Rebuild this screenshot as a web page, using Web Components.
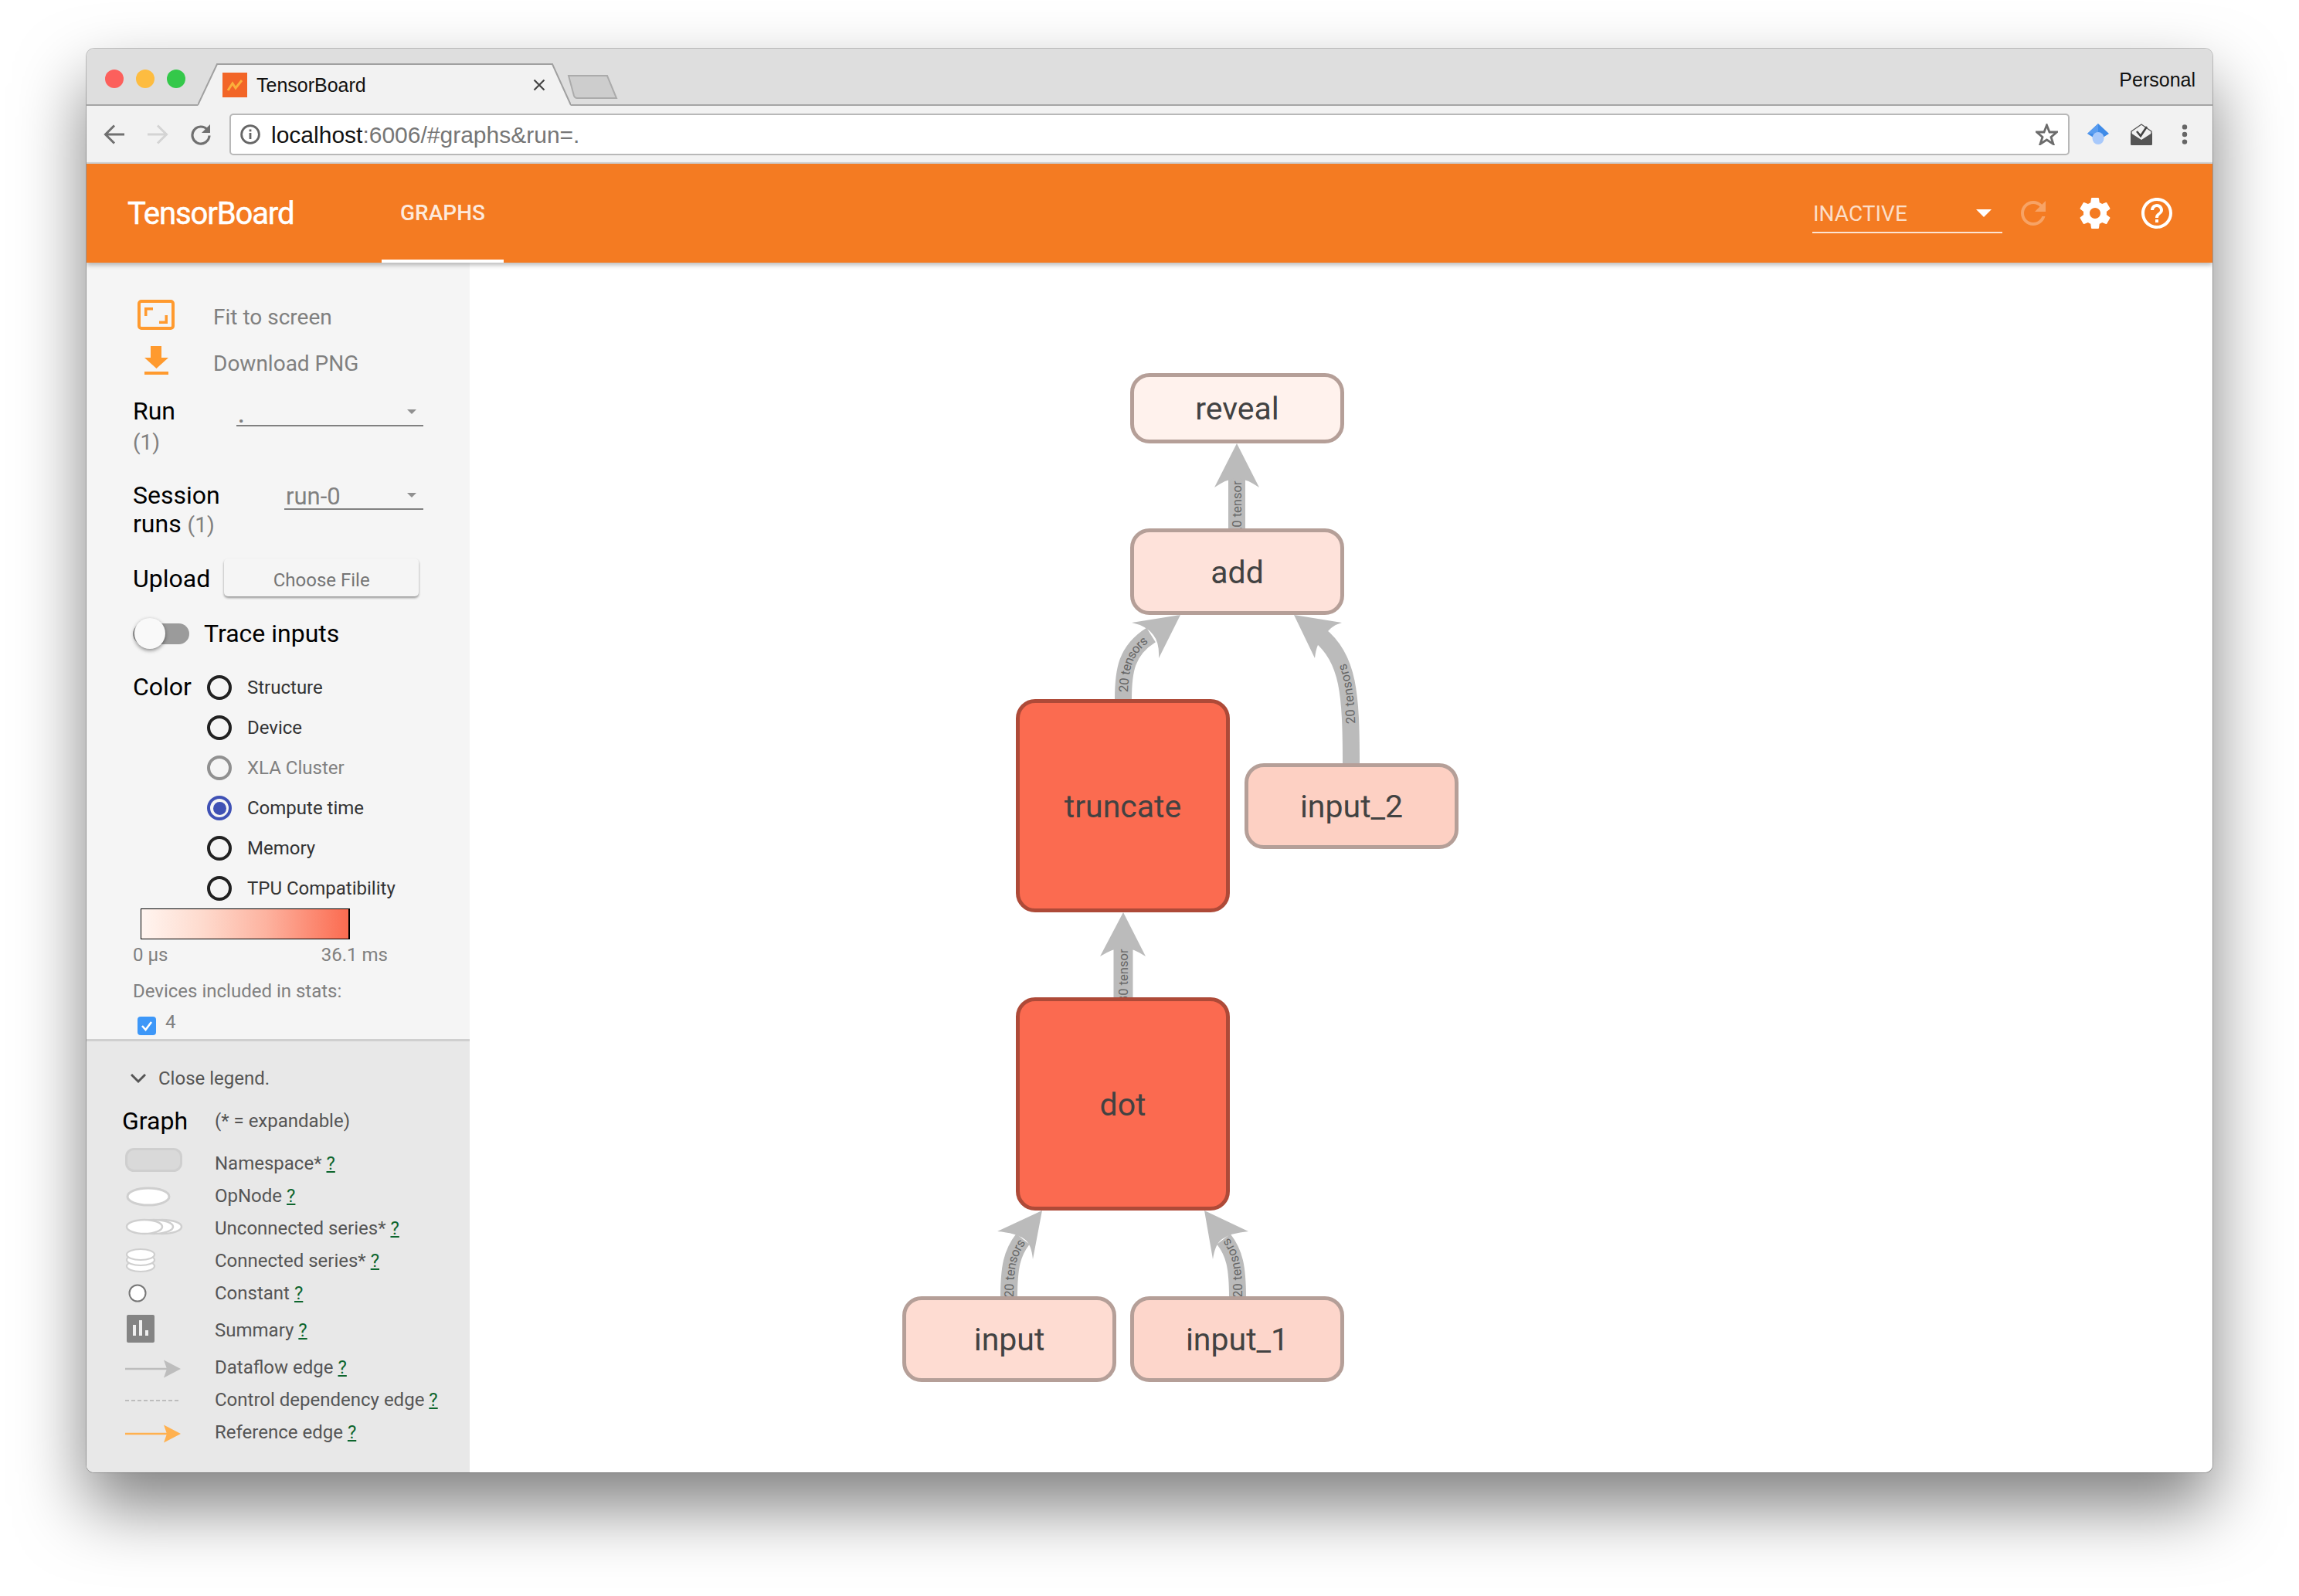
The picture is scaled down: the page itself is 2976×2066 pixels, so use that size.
<!DOCTYPE html>
<html>
<head>
<meta charset="utf-8">
<title>TensorBoard</title>
<style>
  html, body { margin: 0; background: #fff; }
  body { padding: 63px 112px 0; height: 2003px; overflow: hidden; font-family: Roboto, "Liberation Sans", sans-serif; }
</style>
</head>
<body>
<browser-window>
  <tb-header></tb-header>
  <div style="display:flex;flex:1;min-height:0">
    <tb-sidebar>
      <tb-controls></tb-controls>
      <tb-legend></tb-legend>
    </tb-sidebar>
    <tb-graph></tb-graph>
  </div>
</browser-window>

<script>
const GEAR = "M19.43 12.98c.04-.32.07-.64.07-.98s-.03-.66-.07-.98l2.11-1.65c.19-.15.24-.42.12-.64l-2-3.46c-.12-.22-.39-.3-.61-.22l-2.49 1c-.52-.4-1.08-.73-1.69-.98l-.38-2.65C14.46 2.18 14.25 2 14 2h-4c-.25 0-.46.18-.49.42l-.38 2.65c-.61.25-1.17.59-1.69.98l-2.49-1c-.23-.09-.49 0-.61.22l-2 3.46c-.13.22-.07.49.12.64l2.11 1.65c-.04.32-.07.65-.07.98s.03.66.07.98l-2.11 1.65c-.19.15-.24.42-.12.64l2 3.46c.12.22.39.3.61.22l2.49-1c.52.4 1.08.73 1.69.98l.38 2.65c.03.24.24.42.49.42h4c.25 0 .46-.18.49-.42l.38-2.65c.61-.25 1.17-.59 1.69-.98l2.49 1c.23.09.49 0 .61-.22l2-3.46c.12-.22.07-.49-.12-.64l-2.11-1.65zM12 15.5c-1.93 0-3.5-1.57-3.5-3.5s1.57-3.5 3.5-3.5 3.5 1.57 3.5 3.5-1.57 3.5-3.5 3.5z";
const HELP = "M11 18h2v-2h-2v2zm1-16C6.48 2 2 6.48 2 12s4.48 10 10 10 10-4.48 10-10S17.52 2 12 2zm0 18c-4.41 0-8-3.59-8-8s3.59-8 8-8 8 3.59 8 8-3.59 8-8 8zm0-14c-2.21 0-4 1.79-4 4h2c0-1.1.9-2 2-2s2 .9 2 2c0 2-3 1.75-3 5h2c0-2.25 3-2.5 3-5 0-2.21-1.79-4-4-4z";
const REFRESH = "M17.65 6.35C16.2 4.9 14.21 4 12 4c-4.42 0-7.99 3.58-7.99 8s3.57 8 7.99 8c3.73 0 6.84-2.55 7.73-6h-2.08c-.82 2.33-3.04 4-5.65 4-3.31 0-6-2.69-6-6s2.69-6 6-6c1.66 0 3.14.69 4.22 1.78L13 11h7V4l-2.35 2.35z";

class BrowserWindow extends HTMLElement {
  constructor() {
    super();
    this.attachShadow({ mode: "open" });
    this.shadowRoot.innerHTML = `
      <style>
        :host {
          display: flex; flex-direction: column; width: 2752px; height: 1843px;
          border-radius: 10px; overflow: hidden; position: relative; background: #fff;
          box-shadow: 0 44px 88px rgba(0,0,0,.5), 0 0 0 1px rgba(0,0,0,.22);
        }
        .tabs { flex: none; height: 74px; background: #dedede; border-bottom: 2px solid #a5a5a5; box-sizing: border-box;
          display: flex; font-family: "Liberation Sans", sans-serif; color: #111; }
        .lights { display: flex; gap: 16px; padding: 27px 0 0 24px; }
        .lights i { width: 24px; height: 24px; border-radius: 50%; }
        .tab { position: relative; align-self: flex-end; margin: 0 0 -2px 16px; width: 483px; height: 55px; box-sizing: border-box;
          display: flex; align-items: center; padding: 0 33px 0 32px; font-size: 25px; }
        .tab .shape { position: absolute; left: 0; top: 0; }
        .tab .fav, .tab span, .tab .x { position: relative; }
        .tab span { margin-left: 12px; flex: 1; padding-top: 2px; }
        .newtab { margin: 34px 0 0 -5px; }
        .personal { margin-left: auto; padding: 24px 22px 0 0; font-size: 25px; line-height: 32px; }
        .bar { flex: none; height: 75px; background: #f2f2f2; border-bottom: 2px solid #d3d3d3; box-sizing: border-box;
          display: flex; align-items: center; padding: 0 8px; font-family: "Liberation Sans", sans-serif; }
        .btn { width: 56px; display: flex; justify-content: center; flex: none; }
        .url { flex: 1; height: 54px; margin: 0 9px; background: #fff; box-sizing: border-box; display: flex; align-items: center;
          border: 2px solid #b8b8b8; border-radius: 5px; font-size: 30px; color: #111; padding: 0 13px 0 12px; }
        .url div { flex: 1; margin-left: 14px; padding-top: 2px; }
        .url span { color: #767676; }
        .body { flex: 1; display: flex; flex-direction: column; min-height: 0; }
      </style>
      <div class="tabs">
        <div class="lights"><i style="background:#fc605c"></i><i style="background:#fdbc40"></i><i style="background:#34c84a"></i></div>
        <div class="tab">
          <svg class="shape" width="483" height="55"><path d="M0 55 L25 1 H459 L483 55 Z" fill="#f2f2f2"/><path d="M0 54 L25 1 H459 L483 54" fill="none" stroke="#a0a0a0" stroke-width="2"/></svg>
          <svg class="fav" width="32" height="32" viewBox="0 0 32 32"><rect width="32" height="32" fill="#f26527"/><path d="M7 23 L13 14 L17 20 L25 10" fill="none" stroke="#fbb03b" stroke-width="3"/></svg>
          <span>TensorBoard</span>
          <svg class="x" width="16" height="16" viewBox="0 0 16 16"><path d="M1.5 1.5 L14.5 14.5 M14.5 1.5 L1.5 14.5" stroke="#444" stroke-width="2.2"/></svg>
        </div>
        <svg class="newtab" width="66" height="31" viewBox="0 0 66 31"><path d="M2 1 H52 L64 30 H13 Q10 30 9 27 Z" fill="#cdcdcd" stroke="#ababab" stroke-width="2"/></svg>
        <div class="personal">Personal</div>
      </div>
      <div class="bar">
        <div class="btn"><svg width="28" height="26" viewBox="0 0 28 26"><path d="M27 13 H4 M14 1.5 L2.5 13 L14 24.5" fill="none" stroke="#707070" stroke-width="3"/></svg></div>
        <div class="btn"><svg width="28" height="26" viewBox="0 0 28 26"><path d="M1 13 H24 M14 1.5 L25.5 13 L14 24.5" fill="none" stroke="#d4d4d4" stroke-width="3"/></svg></div>
        <div class="btn"><svg width="28" height="28" viewBox="0 0 28 28"><path d="M22.5 8 A11 11 0 1 0 25 15.5" fill="none" stroke="#707070" stroke-width="3.2"/><path d="M26 1 V12 H15 Z" fill="#707070"/></svg></div>
        <div class="url">
          <svg width="26" height="26" viewBox="0 0 26 26"><circle cx="13" cy="13" r="11.4" fill="none" stroke="#666" stroke-width="2.8"/><rect x="11.6" y="11" width="2.8" height="8" fill="#666"/><rect x="11.6" y="6.5" width="2.8" height="2.8" fill="#666"/></svg>
          <div>localhost<span>:6006/#graphs&amp;run=.</span></div>
          <svg width="29" height="28" viewBox="0 0 29 28"><path d="M14.5 2 L18 11 L27.5 11 L20 17.5 L23 26.5 L14.5 21 L6 26.5 L9 17.5 L1.5 11 L11 11 Z" fill="none" stroke="#6c6c6c" stroke-width="2.8"/></svg>
        </div>
        <div class="btn"><svg width="28" height="27" viewBox="0 0 28 27"><path d="M14 0 L28 13 L14 22 L0 13 Z" fill="#3f8be8"/><path d="M14 0 L0 13 L14 13 Z" fill="#5a9df0"/><ellipse cx="14" cy="19" rx="7.5" ry="8" fill="#a8c9fb"/></svg></div>
        <div class="btn"><svg width="28" height="28" viewBox="0 0 28 28"><path d="M1 10 L14 1 L27 10 V27 H1 Z" fill="#f2f2f2" stroke="#555" stroke-width="1.4"/><path d="M0 12 L14 21 L28 12 V26 Q28 28 26 28 H2 Q0 28 0 26 Z" fill="#555"/><path d="M8 10 L13 16 L21 4" fill="none" stroke="#444" stroke-width="2.6"/></svg></div>
        <div class="btn"><svg width="8" height="26" viewBox="0 0 8 26"><circle cx="4" cy="3.4" r="3.2" fill="#666"/><circle cx="4" cy="13" r="3.2" fill="#666"/><circle cx="4" cy="22.6" r="3.2" fill="#666"/></svg></div>
      </div>
      <div class="body"><slot></slot></div>
    `;
  }
}

class TbHeader extends HTMLElement {
  constructor() {
    super();
    this.attachShadow({ mode: "open" });
    this.shadowRoot.innerHTML = `
      <style>
        :host { display: flex; flex: none; align-items: center; height: 128px; background: #f47b22; color: #fff; position: relative; z-index: 2;
          box-shadow: 0 3px 6px rgba(0,0,0,.28); font-family: Roboto, sans-serif; padding-left: 53px; box-sizing: border-box; }
        .title { font-size: 40px; font-weight: 400; width: 329px; letter-spacing: -1.1px; -webkit-text-stroke: .5px #fff; }
        .tab { width: 158px; height: 128px; box-sizing: border-box; border-bottom: 4px solid #fff; text-align: center; line-height: 128px;
          font-size: 28px; font-weight: 500; color: rgba(255,255,255,.85); }
        .spacer { flex: 1; }
        .select { width: 246px; height: 48px; border-bottom: 2px solid rgba(255,255,255,.8); display: flex; justify-content: space-between;
          align-items: center; font-size: 28px; color: rgba(255,255,255,.75); margin-top: 2px; }
        .select span { padding-left: 1px; }
        .select i { width: 0; height: 0; border: 10px solid transparent; border-top: 10px solid #fff; border-bottom: 0; margin-right: 14px; }
        svg { display: block; fill: #fff; }
        .tools { display: flex; gap: 32px; margin: 0 48px 0 16px; }
      </style>
      <div class="title">TensorBoard</div>
      <div class="tab">GRAPHS</div>
      <div class="spacer"></div>
      <div class="select"><span>INACTIVE</span><i></i></div>
      <div class="tools">
        <svg width="48" height="48" viewBox="0 0 24 24" style="opacity:.3"><path d="${REFRESH}"/></svg>
        <svg width="48" height="48" viewBox="0 0 24 24"><path d="${GEAR}"/></svg>
        <svg width="48" height="48" viewBox="0 0 24 24"><path d="${HELP}"/></svg>
      </div>
    `;
  }
}

class TbSidebar extends HTMLElement {
  constructor() {
    super();
    this.attachShadow({ mode: "open" });
    this.shadowRoot.innerHTML = `
      <style>
        :host { display: flex; flex: none; flex-direction: column; width: 496px; background: #f5f5f5; font-family: Roboto, sans-serif; }
      </style>
      <slot></slot>
    `;
  }
}

class TbSelect extends HTMLElement {
  constructor() {
    super();
    this.attachShadow({ mode: "open" });
    this.shadowRoot.innerHTML = `
      <style>
        :host { display: flex; align-items: center; justify-content: space-between; box-sizing: border-box; height: 36px;
          border-bottom: 2px solid #808080; font-size: 31px; color: #808080; padding: 0 9px 0 2px; }
        span { padding-top: 2px; }
        i { width: 0; height: 0; border: 6px solid transparent; border-top: 6px solid #909090; border-bottom: 0; }
      </style>
      <span><slot></slot></span><i></i>
    `;
  }
}

class TbRadio extends HTMLElement {
  constructor() {
    super();
    this.attachShadow({ mode: "open" });
    this.shadowRoot.innerHTML = `
      <style>
        :host { display: flex; align-items: center; height: 52px; font-size: 24px; color: #333; }
        :host([disabled]) { color: #808080; }
        .o { width: 32px; height: 32px; box-sizing: border-box; border: 4.5px solid #212121; border-radius: 50%; margin-right: 20px; position: relative; }
        :host([disabled]) .o { border-color: #909090; }
        :host([checked]) .o { border-color: #3f51b5; }
        :host([checked]) .o::after { content: ""; position: absolute; inset: 3.5px; border-radius: 50%; background: #3f51b5; }
      </style>
      <div class="o"></div><slot></slot>
    `;
  }
}

class TbControls extends HTMLElement {
  constructor() {
    super();
    this.attachShadow({ mode: "open" });
    this.shadowRoot.innerHTML = `
      <style>
        :host { display: block; height: 1005px; box-sizing: border-box; padding: 40px 0 0 60px; color: #000; font-size: 32px; }
        .act { display: flex; align-items: center; height: 60px; color: #808080; font-size: 28px; }
        .act svg { width: 104px; flex: none; display: block; }
        .two { display: flex; justify-content: space-between; width: 376px; }
        .run { margin-top: 13px; height: 97px; line-height: 39px; }
        small { color: #808080; font-size: 28px; }
        .ses { height: 76px; line-height: 37px; margin-top: 13px; }
        .up { display: flex; align-items: center; height: 50px; margin-top: 24px; }
        .up span { margin-top: 2px; }
        .btn { width: 252px; height: 49px; border-radius: 5px; background: #f5f5f5; box-shadow: 0 2px 3px rgba(0,0,0,.4); margin: -2px 0 0 18px;
          font-size: 24px; color: #757575; text-align: center; line-height: 57px; }
        .trace { display: flex; align-items: center; margin-top: 22px; height: 50px; }
        .trk { width: 73px; height: 27px; border-radius: 14px; background: #9b9b9b; position: relative; margin-right: 19px; }
        .trk::after { content: ""; position: absolute; left: 2px; top: -6.5px; width: 40px; height: 40px; border-radius: 50%; background: #f9f9f9; box-shadow: 0 2px 5px rgba(0,0,0,.45); }
        .color { display: flex; margin-top: 19px; }
        .color .c { width: 96px; line-height: 50px; }
        .grad { width: 271px; height: 40px; box-sizing: border-box; border: 1px solid #000; border-right-width: 2px; margin-left: 10px;
          background: linear-gradient(to right, #fff5f0, #fedacd 30%, #fdb3a0 60%, #fb6b50); }
        .lim { display: flex; justify-content: space-between; width: 330px; font-size: 24px; color: #808080; line-height: 40px; }
        .dev { font-size: 24px; color: #808080; margin-top: 7px; line-height: 40px; }
        .chk { display: flex; align-items: center; gap: 12px; margin: 3px 0 0 6px; font-size: 24px; color: #808080; height: 40px; }
        .box { width: 24px; height: 24px; border-radius: 4px; background: #3d97f8; display: block; margin-top: 4px; }
        .chk span { margin-top: -6px; }
      </style>
      <div class="act">
        <svg height="60" viewBox="0 0 104 60">
          <rect x="8" y="10" width="44" height="35" rx="3" fill="none" stroke="#ff9a2e" stroke-width="4"/>
          <path d="M15 29 V18 H26 V21.5 H18.5 V29 Z M45 28 V39 H34 V35.5 H41.5 V28 Z" fill="#ff9a2e"/>
        </svg>
        <span>Fit to screen</span>
      </div>
      <div class="act">
        <svg height="60" viewBox="0 0 104 60">
          <path d="M23 8 H37 V23 H46 L30.5 37 L15 23 H23 Z" fill="#ff9a2e"/><rect x="15" y="41" width="31" height="4" fill="#ff9a2e"/>
        </svg>
        <span>Download PNG</span>
      </div>
      <div class="two run">
        <div>Run<br><small>(1)</small></div>
        <tb-select style="width:242px;margin-top:3px"><span style="position:relative;top:2px;font-weight:500">.</span></tb-select>
      </div>
      <div class="two ses">
        <div>Session<br>runs <small>(1)</small></div>
        <tb-select style="width:180px;margin-top:1px">run-0</tb-select>
      </div>
      <div class="up"><span>Upload</span><div class="btn">Choose File</div></div>
      <div class="trace"><div class="trk"></div><span>Trace inputs</span></div>
      <div class="color">
        <div class="c">Color</div>
        <div style="width:300px">
          <tb-radio>Structure</tb-radio>
          <tb-radio>Device</tb-radio>
          <tb-radio disabled>XLA Cluster</tb-radio>
          <tb-radio checked>Compute time</tb-radio>
          <tb-radio>Memory</tb-radio>
          <tb-radio>TPU Compatibility</tb-radio>
        </div>
      </div>
      <div class="grad"></div>
      <div class="lim"><span>0 μs</span><span>36.1 ms</span></div>
      <div class="dev">Devices included in stats:</div>
      <div class="chk">
        <svg class="box" width="24" height="24" viewBox="0 0 24 24"><path d="M6 12 L10.5 17 L18 7" fill="none" stroke="#fff" stroke-width="2.6"/></svg>
        <span>4</span>
      </div>
    `;
  }
}

class TbLegendRow extends HTMLElement {
  constructor() {
    super();
    this.attachShadow({ mode: "open" });
    this.shadowRoot.innerHTML = `
      <style>
        :host { display: flex; align-items: center; height: 42px; font-size: 24px; color: #555; }
        .ic { width: 120px; flex: none; display: flex; align-items: center; }
        a { color: #0d652d; text-decoration: underline; margin-left: 6px; }
      </style>
      <div class="ic"><slot name="icon"></slot></div>
      <span><slot></slot></span><a>?</a>
    `;
  }
}

class TbLegend extends HTMLElement {
  constructor() {
    super();
    this.attachShadow({ mode: "open" });
    this.shadowRoot.innerHTML = `
      <style>
        :host { display: block; flex: 1; background: #e8e8e8; border-top: 3px solid #cfcfcf; box-sizing: border-box; padding: 28px 0 0 46px;
          font-family: Roboto, sans-serif; color: #555; font-size: 24px; }
        .close { display: flex; align-items: center; gap: 16px; height: 40px; padding-left: 11px; }
        .head { display: flex; align-items: center; height: 50px; margin-top: 10px; }
        .head b { font-weight: 400; font-size: 32px; color: #000; width: 120px; }
        svg { display: block; }
      </style>
      <div class="close">
        <svg width="20" height="14" viewBox="0 0 20 14"><path d="M1 2 L10 11 L19 2" fill="none" stroke="#555" stroke-width="3"/></svg>
        <span>Close legend.</span>
      </div>
      <div class="head"><b>Graph</b><span>(* = expandable)</span></div>
      <tb-legend-row style="margin-top:9px">
        <svg slot="icon" width="80" height="42" viewBox="0 0 80 42"><rect x="5.5" y="2.5" width="71" height="28" rx="10" fill="#d9d9d9" stroke="#cfcfcf" stroke-width="3"/></svg>Namespace*
      </tb-legend-row>
      <tb-legend-row>
        <svg slot="icon" width="80" height="42" viewBox="0 0 80 42"><ellipse cx="34" cy="22" rx="27" ry="11" fill="#fff" stroke="#cfcfcf" stroke-width="3"/></svg>OpNode
      </tb-legend-row>
      <tb-legend-row>
        <svg slot="icon" width="80" height="42" viewBox="0 0 80 42"><ellipse cx="52" cy="19" rx="25" ry="9" fill="#fff" stroke="#cfcfcf" stroke-width="2.5"/><ellipse cx="41" cy="19" rx="25" ry="9" fill="#fff" stroke="#cfcfcf" stroke-width="2.5"/><ellipse cx="29" cy="19" rx="23" ry="9" fill="#fff" stroke="#cfcfcf" stroke-width="2.5"/></svg>Unconnected series*
      </tb-legend-row>
      <tb-legend-row>
        <svg slot="icon" width="80" height="42" viewBox="0 0 80 42"><ellipse cx="24" cy="28" rx="18" ry="7" fill="#fff" stroke="#cfcfcf" stroke-width="2.2"/><ellipse cx="24" cy="20" rx="18" ry="7" fill="#fff" stroke="#cfcfcf" stroke-width="2.2"/><ellipse cx="24" cy="13" rx="18" ry="7" fill="#fff" stroke="#cfcfcf" stroke-width="2.2"/></svg>Connected series*
      </tb-legend-row>
      <tb-legend-row>
        <svg slot="icon" width="80" height="42" viewBox="0 0 80 42"><circle cx="20" cy="21" r="10.5" fill="#fff" stroke="#777" stroke-width="2"/></svg>Constant
      </tb-legend-row>
      <tb-legend-row style="height:54px">
        <svg slot="icon" width="80" height="54" viewBox="0 0 80 54"><rect x="6" y="7" width="36" height="36" rx="2" fill="#848484"/><rect x="14" y="20" width="4" height="14" fill="#f0f0f0"/><rect x="22" y="14" width="4" height="20" fill="#f0f0f0"/><rect x="30" y="27" width="4" height="7" fill="#f0f0f0"/></svg>Summary
      </tb-legend-row>
      <tb-legend-row>
        <svg slot="icon" width="80" height="42" viewBox="0 0 80 42"><path d="M4 23 H58" stroke="#bdbdbd" stroke-width="2.4"/><path d="M54 11.5 L76 23 L54 34.5 L58 23 Z" fill="#bdbdbd"/></svg>Dataflow edge
      </tb-legend-row>
      <tb-legend-row>
        <svg slot="icon" width="80" height="42" viewBox="0 0 80 42"><path d="M4 22 H76" stroke="#bdbdbd" stroke-width="2" stroke-dasharray="5 3"/></svg>Control dependency edge
      </tb-legend-row>
      <tb-legend-row>
        <svg slot="icon" width="80" height="42" viewBox="0 0 80 42"><path d="M4 23 H58" stroke="#ffb14f" stroke-width="2.6"/><path d="M54 11.5 L76 23 L54 34.5 L58 23 Z" fill="#ffb14f"/></svg>Reference edge
      </tb-legend-row>
    `;
  }
}

// node on the graph canvas, placed from attributes
class TbNode extends HTMLElement {
  constructor() {
    super();
    this.attachShadow({ mode: "open" });
    this.shadowRoot.innerHTML = `
      <style>
        :host { display: flex; align-items: center; justify-content: center; position: absolute; box-sizing: border-box; padding-top: 1px;
          border: 5px solid #b59f98; border-radius: 25px; font: 41px Roboto, sans-serif; color: #424242; }
      </style>
      <slot></slot>
    `;
  }
  connectedCallback() {
    const [x, y, w, h] = this.getAttribute("box").split(" ");
    Object.assign(this.style, { left: x + "px", top: y + "px", width: w + "px", height: h + "px" });
    this.style.background = this.getAttribute("fill");
    if (this.hasAttribute("stroke")) this.style.borderColor = this.getAttribute("stroke");
  }
}

class TbGraph extends HTMLElement {
  constructor() {
    super();
    this.attachShadow({ mode: "open" });
    // graph coords are window coords minus the canvas origin (608, 340)
    this.shadowRoot.innerHTML = `
      <style>
        :host { display: block; flex: 1; position: relative; background: #fff; }
        svg { position: absolute; left: 0; top: 0; }
        text { font: 16.5px Roboto, sans-serif; fill: #666; }
        .e { fill: none; stroke: #bbb; }
        .h { fill: #bbb; }
      </style>
      <svg width="2256" height="1566">
        <g transform="translate(-608,-340)">
          <path id="e1" class="e" stroke-width="22" d="M1601 692 V610"/>
          <path class="h" d="M1601 574 L1630 631 Q1614 620 1601 619 Q1588 620 1572 631 Z"/>
          <text dy="6"><textPath href="#e1">20 tensor</textPath></text>

          <path id="e2" class="e" stroke-width="22" d="M1454 905 C1454 868 1458 842 1490 822"/>
          <path class="h" d="M1528 796 L1500 852 Q1501 832 1493 822 Q1484 810 1465 806 Z"/>
          <text dy="6"><textPath href="#e2" startOffset="9">20 tensors</textPath></text>

          <path id="e3" class="e" stroke-width="22" d="M1749 988 C1749 900 1746 852 1708 822"/>
          <path class="h" d="M1675 796 L1737 806 Q1722 810 1714 824 Q1704 832 1702 852 Z"/>
          <text dy="6"><textPath href="#e3" startOffset="51">20 tensors</textPath></text>

          <path id="e4" class="e" stroke-width="25" d="M1454 1298 V1225"/>
          <path class="h" d="M1454 1181 L1483 1238 Q1466 1227 1454 1227 Q1442 1227 1424 1238 Z"/>
          <text dy="6"><textPath href="#e4">30 tensor</textPath></text>

          <path id="e5" class="e" stroke-width="22" d="M1306 1680 C1306 1640 1310 1622 1324 1604"/>
          <path class="h" d="M1349 1567 L1337 1630 Q1335 1610 1326 1604 Q1315 1596 1291 1594 Z"/>
          <text dy="6"><textPath href="#e5">20 tensors</textPath></text>

          <path id="e6" class="e" stroke-width="22" d="M1602 1680 C1602 1640 1598 1622 1584 1604"/>
          <path class="h" d="M1559 1567 L1616 1594 Q1593 1596 1582 1604 Q1573 1610 1570 1630 Z"/>
          <text dy="6"><textPath href="#e6">20 tensors</textPath></text>
        </g>
      </svg>
      <tb-node box="855 143 277 91" fill="#fff2ed">reveal</tb-node>
      <tb-node box="855 344 277 112" fill="#fee2da">add</tb-node>
      <tb-node box="707 565 277 276" fill="#fb6b50" stroke="#ae4a38">truncate</tb-node>
      <tb-node box="1003 648 277 111" fill="#fdd0c3">input_2</tb-node>
      <tb-node box="707 951 277 276" fill="#fb6a50" stroke="#ae4a38">dot</tb-node>
      <tb-node box="560 1338 277 111" fill="#fedcd2">input</tb-node>
      <tb-node box="855 1338 277 111" fill="#fdd6cb">input_1</tb-node>
    `;
  }
}

customElements.define("browser-window", BrowserWindow);
customElements.define("tb-header", TbHeader);
customElements.define("tb-sidebar", TbSidebar);
customElements.define("tb-select", TbSelect);
customElements.define("tb-radio", TbRadio);
customElements.define("tb-controls", TbControls);
customElements.define("tb-legend-row", TbLegendRow);
customElements.define("tb-legend", TbLegend);
customElements.define("tb-node", TbNode);
customElements.define("tb-graph", TbGraph);
</script>
</body>
</html>
